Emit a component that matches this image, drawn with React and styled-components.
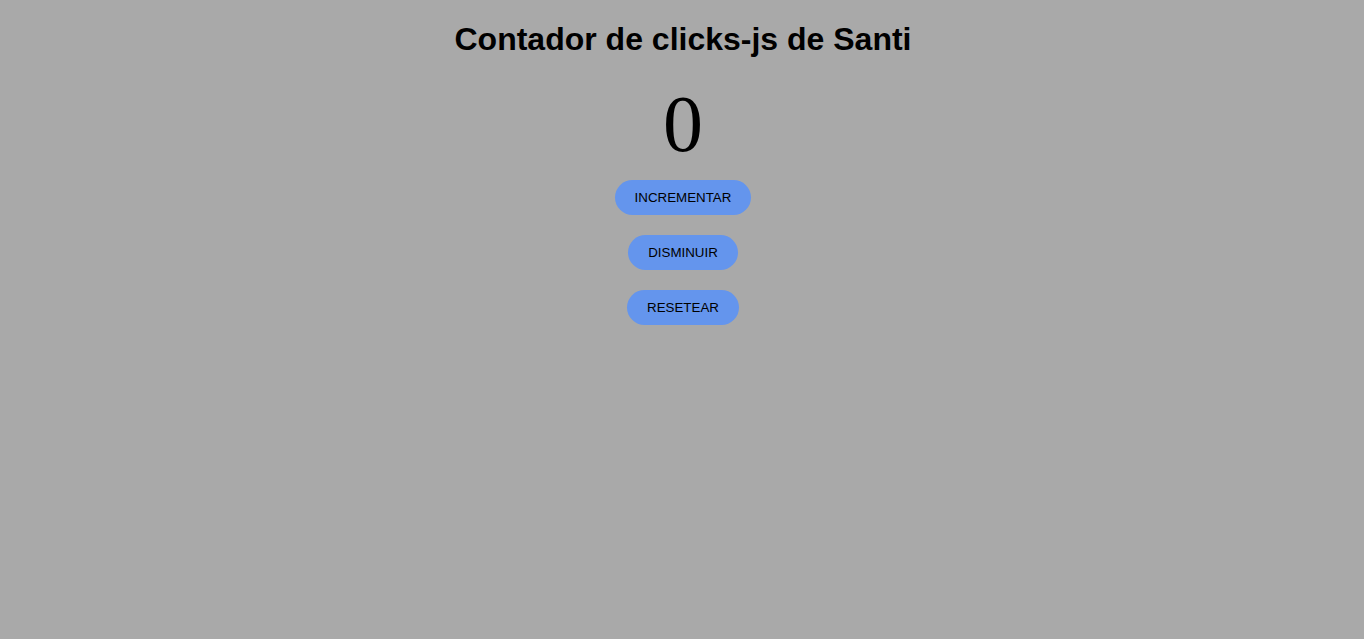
import styled, { createGlobalStyle } from "styled-components";

const GlobalStyle = createGlobalStyle`
  html, body {
    margin: 0;
    background: #a9a9a9;
  }
  body {
    padding: 8px 8px 8px 10px;
    min-height: 639px;
    box-sizing: border-box;
  }
`;

const Page = styled.main`
  display: flex;
  flex-direction: column;
  align-items: center;
`;

const Title = styled.h1`
  margin: 13px 0 0;
  font-family: "Liberation Sans", Arial, sans-serif;
  font-size: 32px;
  font-weight: 700;
  color: #000;
`;

const Count = styled.p`
  margin: 26px 0 0;
  font-family: "Liberation Serif", "Times New Roman", serif;
  font-size: 80px;
  line-height: 1;
  color: #000;
`;

const Buttons = styled.div`
  display: flex;
  flex-direction: column;
  align-items: center;
  gap: 20px;
  margin-top: 16px;
`;

const ActionButton = styled.button`
  padding: 10px 20px;
  border: none;
  border-radius: 20px;
  background: #6495ed;
  color: #000;
  font-family: "Liberation Sans", Arial, sans-serif;
  font-size: 13.33px;
  line-height: 15px;
  cursor: pointer;
`;

function App() {
  return (
    <>
      <GlobalStyle />
      <Page>
        <Title>Contador de clicks-js de Santi</Title>
        <Count>0</Count>
        <Buttons>
          <ActionButton type="button">INCREMENTAR</ActionButton>
          <ActionButton type="button">DISMINUIR</ActionButton>
          <ActionButton type="button">RESETEAR</ActionButton>
        </Buttons>
      </Page>
    </>
  );
}

export default App;
